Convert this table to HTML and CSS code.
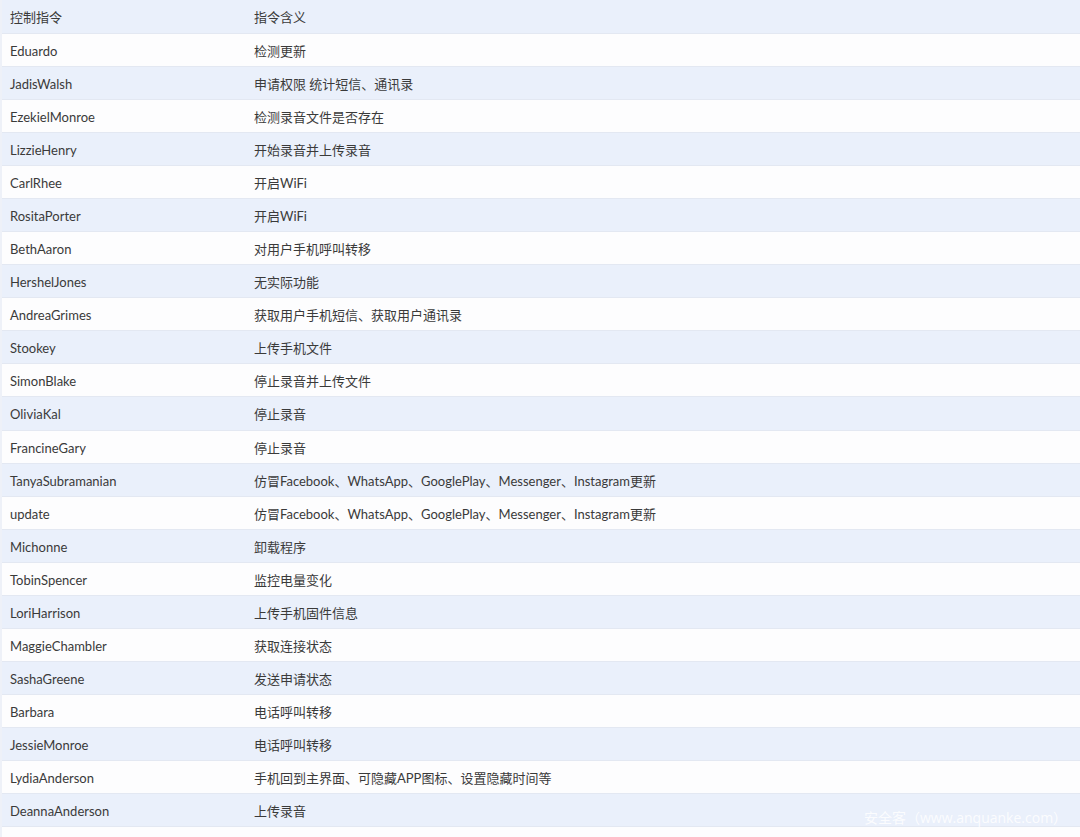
FILE: index.html
```html
<!DOCTYPE html>
<html lang="zh">
<head>
<meta charset="utf-8">
<link rel="stylesheet" href="styles.css">
</head>
<body>
<div class="wrap">
<table class="cmd">
<tbody>
<tr class="alt"><td class="c1">控制指令</td><td>指令含义</td></tr>
<tr><td class="c1">Eduardo</td><td>检测更新</td></tr>
<tr class="alt"><td class="c1">JadisWalsh</td><td>申请权限 统计短信、通讯录</td></tr>
<tr><td class="c1">EzekielMonroe</td><td>检测录音文件是否存在</td></tr>
<tr class="alt"><td class="c1">LizzieHenry</td><td>开始录音并上传录音</td></tr>
<tr><td class="c1">CarlRhee</td><td>开启WiFi</td></tr>
<tr class="alt"><td class="c1">RositaPorter</td><td>开启WiFi</td></tr>
<tr><td class="c1">BethAaron</td><td>对用户手机呼叫转移</td></tr>
<tr class="alt"><td class="c1">HershelJones</td><td>无实际功能</td></tr>
<tr><td class="c1">AndreaGrimes</td><td>获取用户手机短信、获取用户通讯录</td></tr>
<tr class="alt"><td class="c1">Stookey</td><td>上传手机文件</td></tr>
<tr><td class="c1">SimonBlake</td><td>停止录音并上传文件</td></tr>
<tr class="alt"><td class="c1">OliviaKal</td><td>停止录音</td></tr>
<tr><td class="c1">FrancineGary</td><td>停止录音</td></tr>
<tr class="alt"><td class="c1">TanyaSubramanian</td><td>仿冒Facebook、WhatsApp、GooglePlay、Messenger、Instagram更新</td></tr>
<tr><td class="c1">update</td><td>仿冒Facebook、WhatsApp、GooglePlay、Messenger、Instagram更新</td></tr>
<tr class="alt"><td class="c1">Michonne</td><td>卸载程序</td></tr>
<tr><td class="c1">TobinSpencer</td><td>监控电量变化</td></tr>
<tr class="alt"><td class="c1">LoriHarrison</td><td>上传手机固件信息</td></tr>
<tr><td class="c1">MaggieChambler</td><td>获取连接状态</td></tr>
<tr class="alt"><td class="c1">SashaGreene</td><td>发送申请状态</td></tr>
<tr><td class="c1">Barbara</td><td>电话呼叫转移</td></tr>
<tr class="alt"><td class="c1">JessieMonroe</td><td>电话呼叫转移</td></tr>
<tr><td class="c1">LydiaAnderson</td><td>手机回到主界面、可隐藏APP图标、设置隐藏时间等</td></tr>
<tr class="alt"><td class="c1">DeannaAnderson</td><td>上传录音</td></tr>
<tr><td class="c1">&nbsp;</td><td>&nbsp;</td></tr>
</tbody>
</table>
<div class="watermark">安全客（www.anquanke.com）</div>
</div>
</body>
</html>
```

FILE: styles.css
```css
html, body {
  margin: 0;
  padding: 0;
  background: #fdfdfe;
  overflow: hidden;
}
.wrap {
  position: relative;
  width: 1080px;
  height: 837px;
  overflow: hidden;
}
.cmd {
  width: 1080px;
  border-collapse: collapse;
  table-layout: fixed;
  font-family: "Lato", "Noto Sans CJK SC", sans-serif;
  font-size: 13px;
  color: #3a3a3a;
  border-left: 2px solid #eef1f8;
}
.cmd tr {
  height: 33.08px;
  background: #fdfdfe;
}
.cmd tr.alt {
  background: #eaf0fb;
}
.cmd td {
  padding: 2px 0 0 8px;
  border-bottom: 1px solid #e3e8f2;
  vertical-align: middle;
  white-space: nowrap;
  line-height: 16px;
}
.cmd td.c1 {
  width: 236px;
}
.watermark {
  position: absolute;
  left: 864px;
  top: 807px;
  font-family: "Open Sans", "Noto Sans CJK SC", sans-serif;
  font-size: 14px;
  color: rgba(255, 255, 255, 0.85);
  white-space: nowrap;
}
```
